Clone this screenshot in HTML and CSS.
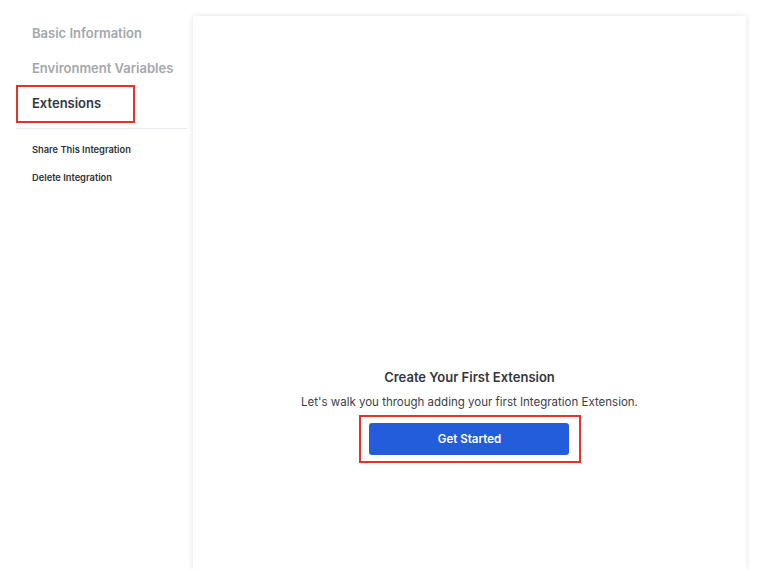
FILE: index.html
```html
<!DOCTYPE html>
<html lang="en">
<head>
  <meta charset="UTF-8">
  <title>Integration Extensions</title>
  <meta name="viewport" content="width=device-width, initial-scale=1.0">
  <link rel="stylesheet" href="styles.css">
</head>
<body>

  <div class="layout">

    <!-- Side navigation -->
    <nav class="sidebar">
      <a class="nav-item">Basic Information</a>
      <a class="nav-item">Environment Variables</a>
      <a class="nav-item active">Extensions</a>
      <div class="divider"></div>
      <a class="nav-action">Share This Integration</a>
      <a class="nav-action">Delete Integration</a>
    </nav>

    <!-- Main panel -->
    <main class="panel">
      <div class="empty-state">
        <h2>Create Your First Extension</h2>
        <p>Let's walk you through adding your first Integration Extension.</p>
        <div class="highlight">
          <button class="btn-primary">Get Started</button>
        </div>
      </div>
    </main>

  </div>

</body>
</html>
```

FILE: styles.css
```css
/* Base styles */
body {
  margin: 0;
  font-family: Inter, "Noto Sans", sans-serif;
  background-color: #ffffff;
  color: #374151;
  height: 570px;
  overflow: hidden;
}

.layout {
  display: flex;
  height: 570px;
}

/* Sidebar */
.sidebar {
  width: 171px;
  margin-left: 16px;
  padding-top: 16px;
  display: flex;
  flex-direction: column;
}

.nav-item {
  font-size: 13px;
  font-weight: 600;
  color: #a3a7ae;
  padding: 9px 16px;
  line-height: 17px;
  white-space: nowrap;
}

.nav-item.active {
  color: #33373d;
  width: 87px;
  border: 2px solid #e5332a;
  padding: 8.5px 14px;
  margin: -1.5px 0;
}

.divider {
  height: 1px;
  background-color: #e6e9ef;
  margin: 7px 0 15px 0;
}

.nav-action {
  font-size: 9.3px;
  font-weight: 600;
  color: #2f3237;
  padding: 0 16px;
  line-height: 12px;
  margin-bottom: 16px;
}

/* Main panel */
.panel {
  width: 553px;
  margin-left: 6px;
  margin-top: 16px;
  background: #ffffff;
  box-shadow: 0 0 6px rgba(0, 0, 0, 0.12);
  display: flex;
  justify-content: center;
}

.empty-state {
  margin-top: 353px;
  display: flex;
  flex-direction: column;
  align-items: center;
}

.empty-state h2 {
  font-size: 13px;
  font-weight: 600;
  color: #33373d;
  margin: 0;
  line-height: 17px;
}

.empty-state p {
  font-size: 11.5px;
  color: #3c4047;
  margin: 8px 0 5px 0;
  line-height: 16px;
}

.highlight {
  border: 2px solid #e5332a;
  padding: 6px 10px 6px 8px;
  margin-left: 2px;
}

.btn-primary {
  width: 200px;
  height: 32px;
  background-color: #235ddb;
  color: #ffffff;
  font-family: Inter, "Noto Sans", sans-serif;
  font-size: 11.5px;
  font-weight: 600;
  border: none;
  border-radius: 3px;
  cursor: pointer;
  display: block;
}
```
